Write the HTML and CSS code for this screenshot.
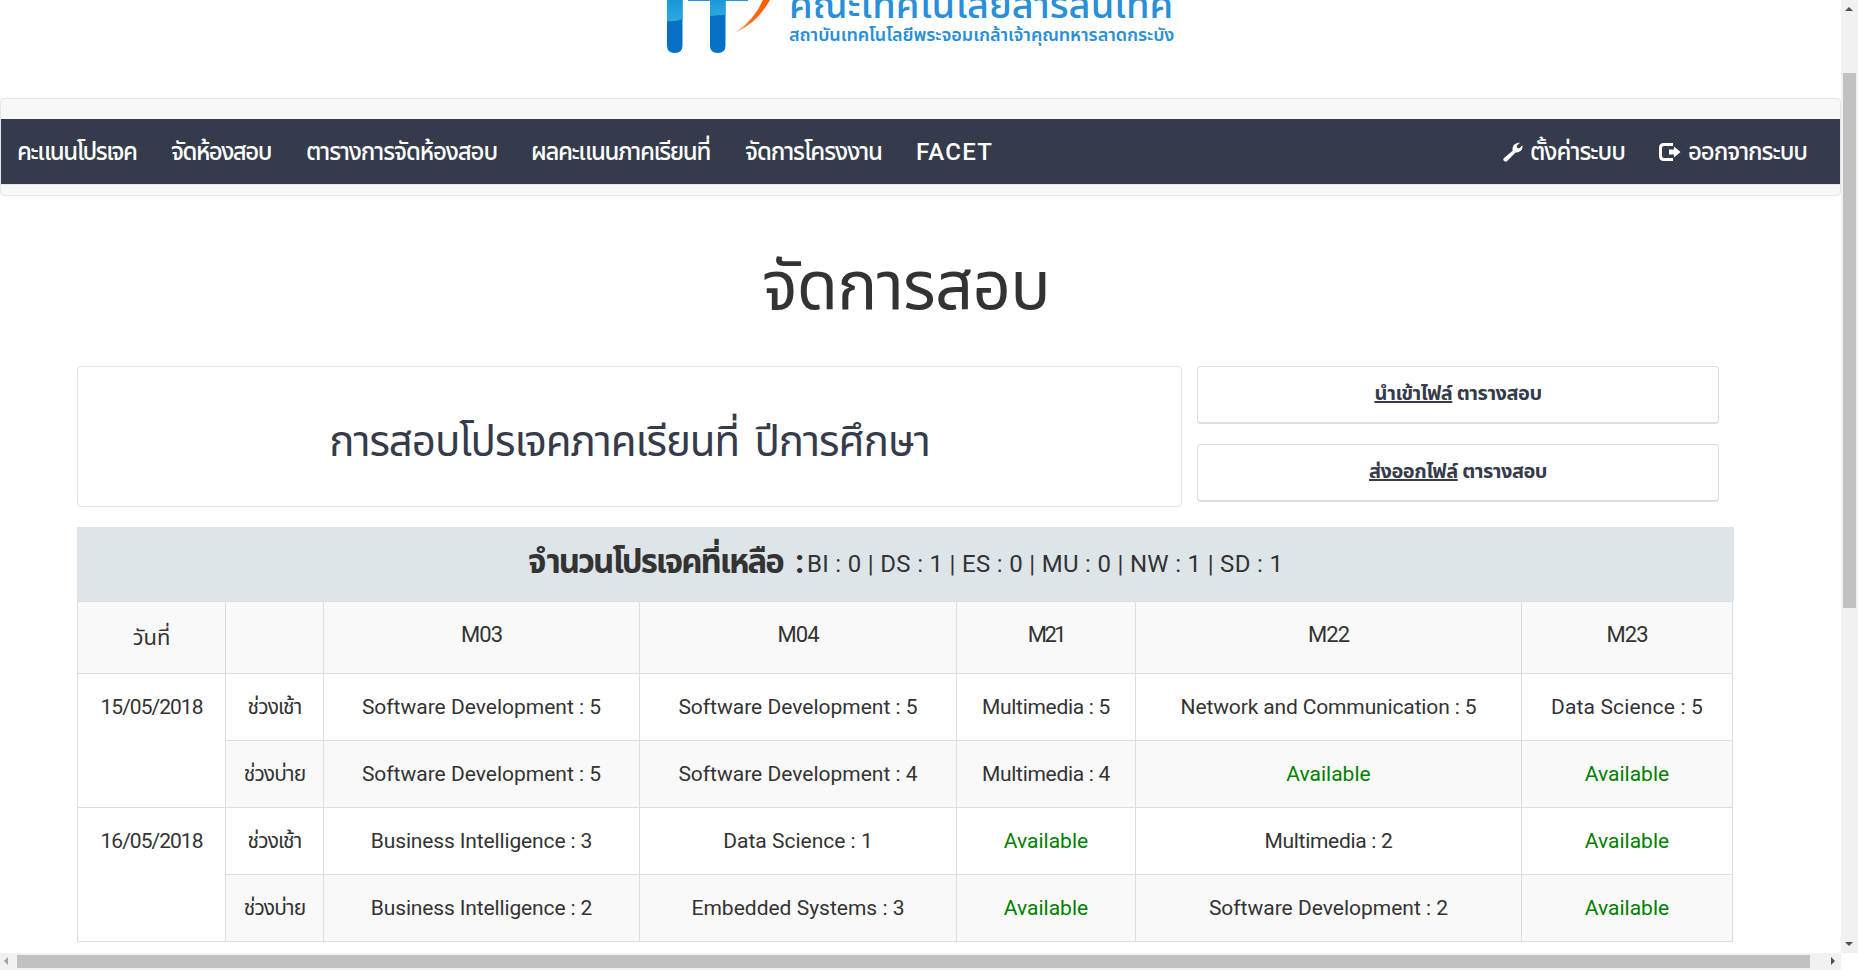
FILE: index.html
```html
<!DOCTYPE html>
<html lang="th">
<head>
<meta charset="utf-8">
<title>จัดการสอบ</title>
<link rel="stylesheet" href="styles.css">
</head>
<body>
<div class="viewport">
  <div class="page">
    <header class="brand">
      <svg class="brand-mark" width="110" height="60" viewBox="0 0 110 60">
        <defs>
          <linearGradient id="top" x1="0" y1="0" x2="0" y2="1"><stop offset="0" stop-color="#1b97da"/><stop offset="1" stop-color="#2ba9e1"/></linearGradient>
          <linearGradient id="swoosh" x1="1" y1="0" x2="0" y2="1"><stop offset="0" stop-color="#ff5a00"/><stop offset="0.6" stop-color="#ff6a1a"/><stop offset="1" stop-color="#ffb184"/></linearGradient>
        </defs>
        <path d="M7 0H22.500V45.500Q22.500 53 14.700 53Q7 53 7 45.500Z" fill="#0670c4"/>
        <path d="M50 0H65.500V45.500Q65.500 53 57.700 53Q50 53 50 45.500Z" fill="#0670c4"/>
        <path d="M7 0H22.500V19Q15 22 7 21Z" fill="url(#top)"/>
        <path d="M28 0H88V1H65.500V15Q58 15 50 16V1H28Z" fill="url(#top)"/>
        <path d="M75 33Q95 19 103 0H110Q98 22 75 33Z" fill="url(#swoosh)"/>
      </svg>
      <div class="brand-text">
        <div class="brand-name">คณะเทคโนโลยีสารสนเทศ</div>
        <div class="brand-sub">สถาบันเทคโนโลยีพระจอมเกล้าเจ้าคุณทหารลาดกระบัง</div>
      </div>
    </header>
    <nav class="navbar">
      <div class="navbar-inner">
        <a class="n1">คะแนนโปรเจค</a>
        <a class="n2">จัดห้องสอบ</a>
        <a class="n3">ตารางการจัดห้องสอบ</a>
        <a class="n4">ผลคะแนนภาคเรียนที่</a>
        <a class="n5">จัดการโครงงาน</a>
        <a class="n6">FACET</a>
        <a class="n7"><svg width="20" height="20" viewBox="0 0 20 20"><path d="M.8 16.300L9.700 8.800Q8.700 5 11.300 2.500Q14 .2 17 .8L13.700 3.800L14.200 6L16.400 6.300L19.500 3.300Q20 6.500 17.800 8.700Q15.300 11 12.500 10.400L4.200 19Q2.500 20.200 1.100 18.900Q-.3 17.600 .8 16.300Z"/></svg>ตั้งค่าระบบ</a>
        <a class="n8"><svg width="22" height="18" viewBox="0 0 22 18"><path d="M14 1.500H5Q1.500 1.500 1.500 5V13Q1.500 16.500 5 16.500H14" fill="none" stroke="#fff" stroke-width="3"/><path d="M10 6.500H15V3.500L21.500 9L15 14.500V11.500H10Z"/></svg>ออกจากระบบ</a>
      </div>
    </nav>
    <h1>จัดการสอบ</h1>
    <section class="summary">
      <div class="term">การสอบโปรเจคภาคเรียนที่ ปีการศึกษา</div>
      <div class="actions">
        <a class="action"><u>นำเข้าไฟล์</u> ตารางสอบ</a>
        <a class="action"><u>ส่งออกไฟล์</u> ตารางสอบ</a>
      </div>
    </section>
    <div class="remaining"><b>จำนวนโปรเจคที่เหลือ :</b><span class="counts">BI : 0 | DS : 1 | ES : 0 | MU : 0 | NW : 1 | SD : 1</span></div>
    <table class="schedule">
      <colgroup><col class="c1"><col class="c2"><col class="c3"><col class="c4"><col class="c5"><col class="c6"><col class="c7"></colgroup>
      <tr class="head"><td class="day">วันที่</td><td></td><td>M03</td><td>M04</td><td class="narrow">M21</td><td>M22</td><td>M23</td></tr>
      <tr><td rowspan="2" class="date">15/05/2018</td><td class="slot">ช่วงเช้า</td><td>Software Development : 5</td><td>Software Development : 5</td><td class="mm">Multimedia : 5</td><td class="net">Network and Communication : 5</td><td class="ds">Data Science : 5</td></tr>
      <tr class="alt"><td class="slot">ช่วงบ่าย</td><td>Software Development : 5</td><td>Software Development : 4</td><td class="mm">Multimedia : 4</td><td class="free">Available</td><td class="free">Available</td></tr>
      <tr><td rowspan="2" class="date">16/05/2018</td><td class="slot">ช่วงเช้า</td><td class="net">Business Intelligence : 3</td><td>Data Science : 1</td><td class="free">Available</td><td class="mm">Multimedia : 2</td><td class="free">Available</td></tr>
      <tr class="alt"><td class="slot">ช่วงบ่าย</td><td class="net">Business Intelligence : 2</td><td>Embedded Systems : 3</td><td class="free">Available</td><td>Software Development : 2</td><td class="free">Available</td></tr>
    </table>
  </div>
  <div class="vbar"><i class="arrow up"></i><div class="vthumb"></div><i class="arrow down"></i></div>
  <div class="hbar"><i class="arrow left"></i><div class="hthumb"></div><i class="arrow right"></i></div>
  <div class="corner"></div>
</div>
</body>
</html>
```
FILE: styles.css
```css
* { box-sizing: border-box; }
body { margin: 0; overflow: hidden; background: #fff; color: #333; font-family: Roboto, "Noto Sans", "Noto Sans Thai", sans-serif; }
.viewport { display: grid; grid-template-columns: 1841px 17px; grid-template-rows: 953px 17px; width: 1858px; height: 970px; }
.page { overflow: hidden; white-space: nowrap; }
.brand { display: flex; height: 98px; padding-left: 660px; }
.brand-mark { flex: none; width: 110px; height: 60px; }
.brand-text { margin-left: 19px; height: 60px; color: #288fd8; font-weight: 500; }
.brand-name { height: 18px; line-height: 11px; font-size: 38px; }
.brand-sub { height: 34px; line-height: 34px; font-size: 18px; font-weight: 600; letter-spacing: -0.07px; }
.navbar { height: 98px; padding-top: 20px; border: 1px solid #e7e7e7; border-radius: 4px; background: #f8f8f8; }
.navbar-inner { display: flex; height: 66px; line-height: 65px; padding-left: 16px; background: #353b4a; border-bottom: 1px solid #e7e7e7; color: #fff; font-size: 24px; font-weight: 500; }
.navbar-inner a { display: flex; align-items: center; flex: none; padding-top: 2px; }
.navbar-inner svg { fill: #fff; flex: none; margin: 0 7px 1px 0; }
.n1 { width: 154px; letter-spacing: -1.5px; }
.n2 { width: 135px; letter-spacing: -1.48px; }
.n3 { width: 225px; letter-spacing: -1.1px; }
.n4 { width: 214px; letter-spacing: -1.4px; }
.n5 { width: 171px; letter-spacing: -1.07px; }
.n6 { width: 587px; letter-spacing: 1.2px; }
.n7 { width: 156px; letter-spacing: -1.01px; }
.n8 { letter-spacing: -1.05px; }
h1 { margin: 0; height: 170px; padding-left: 762px; line-height: 180px; font-size: 67px; font-weight: 400; letter-spacing: -0.8px; }
.summary { display: flex; gap: 15px; height: 161px; padding-left: 77px; color: #353b4a; }
.term { width: 1105px; height: 141px; border: 1px solid #e3e3e3; border-radius: 4px; text-align: center; line-height: 150px; font-size: 42px; letter-spacing: -1.05px; word-spacing: 6px; }
.actions { display: flex; flex-direction: column; gap: 20px; }
.action { width: 522px; height: 58px; border: 1px solid #ddd; border-bottom-width: 2px; border-radius: 4px; text-align: center; line-height: 52px; font-size: 20px; font-weight: 700; letter-spacing: -0.5px; }
.remaining { display: flex; width: 1657px; height: 74px; margin-left: 77px; padding-left: 451px; background: #dde5e8; line-height: 70px; font-size: 24px; }
.remaining b { width: 279px; font-size: 33px; letter-spacing: -2px; word-spacing: 6px; }
.counts { line-height: 75px; letter-spacing: 0.31px; }
.schedule { width: 1656px; margin-left: 77px; table-layout: fixed; border-collapse: collapse; font-size: 21px; line-height: 24px; text-align: center; }
.schedule td { height: 67px; padding: 0; border: 1px solid #ddd; }
.schedule .head td { height: 72px; padding-bottom: 5px; background: #f9f9f9; font-size: 22px; letter-spacing: -0.9px; }
.schedule .head .day { padding-bottom: 0; letter-spacing: 0; }
.schedule .head .narrow { letter-spacing: -2.5px; }
.alt td { background: #f9f9f9; }
.schedule .date { vertical-align: top; padding-top: 21px; letter-spacing: -0.97px; }
.slot { letter-spacing: -0.9px; }
.mm { letter-spacing: -0.3px; }
.net { letter-spacing: -0.14px; }
.ds { letter-spacing: 0.16px; }
.schedule .free { color: green; }
.c1 { width: 148px; } .c2 { width: 98px; } .c3 { width: 316px; } .c4 { width: 317px; } .c5 { width: 179px; } .c6 { width: 386px; } .c7 { width: 211px; }
.vbar { position: relative; padding: 73px 2px 0; background: #f1f1f1; }
.vthumb { width: 13px; height: 535px; background: #c1c1c1; }
.hbar { position: relative; background: #f1f1f1; padding: 2px 0 0 17px; }
.hthumb { width: 1793px; height: 13px; background: #c1c1c1; }
.arrow { position: absolute; border: 4px solid transparent; }
.up { left: 4px; top: 3px; border-bottom-color: #505050; }
.down { left: 4px; bottom: 3px; border-top-color: #505050; }
.left { left: 0; top: 4px; border-right-color: #a3a3a3; }
.right { right: 2px; top: 4px; border-left-color: #505050; }
```
